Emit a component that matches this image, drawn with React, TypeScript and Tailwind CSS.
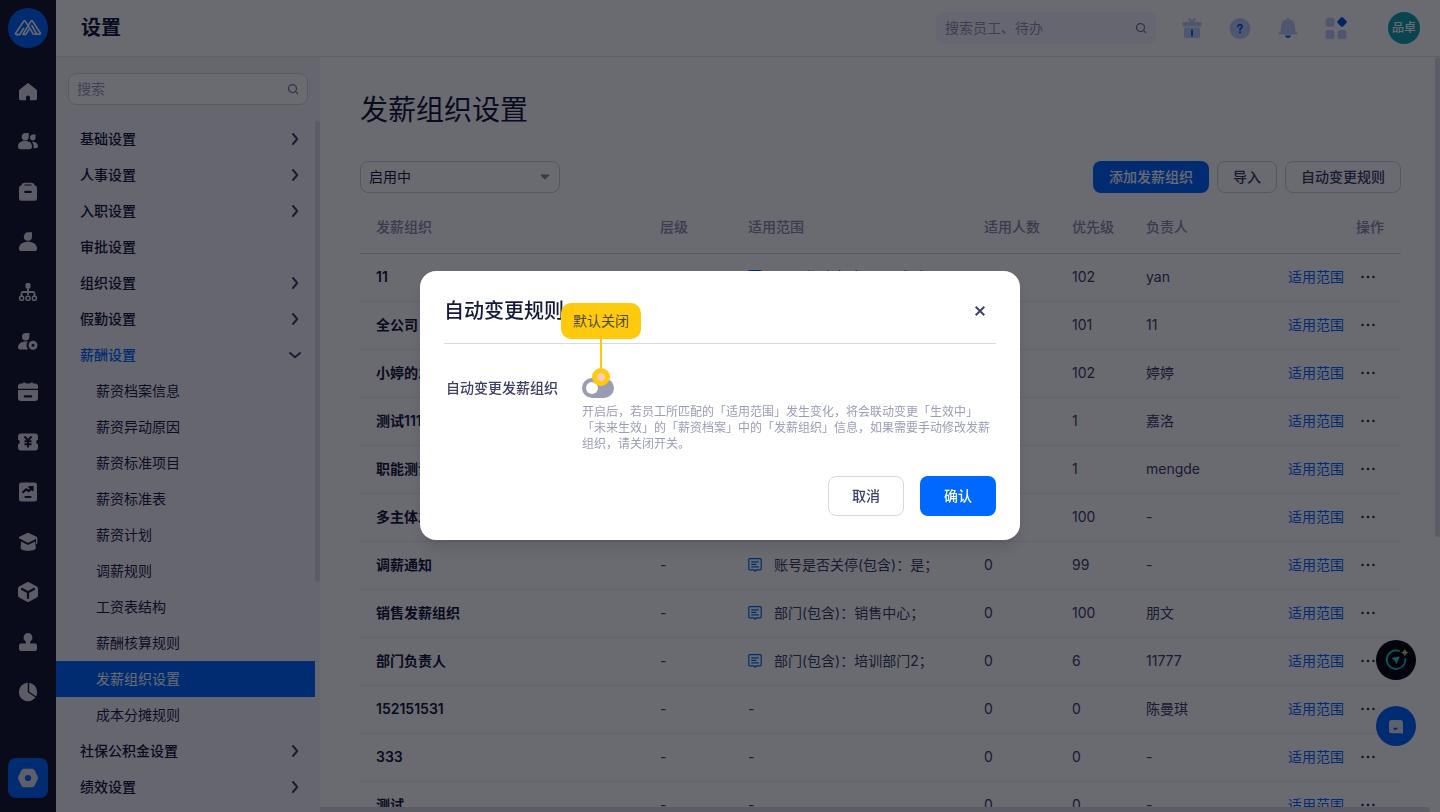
import React from "react";
import { Search } from "lucide-react";

const FONT = "font-['Inter','Noto_Sans_CJK_SC',sans-serif]";

const railIcons: { label: string; art: React.ReactNode }[] = [
  {
    label: "首页",
    art: <path d="M10.300 2.400 2.700 8.600A2 2 0 0 0 2 10.200V17.500A1.800 1.800 0 0 0 3.800 19.300H9V16.500a2 2 0 0 1 4 0v2.800h5.200A1.800 1.800 0 0 0 20 17.500V10.200a2 2 0 0 0-.700-1.600L11.700 2.400a1.100 1.100 0 0 0-1.400 0Z" />,
  },
  {
    label: "员工",
    art: (
      <>
        <path d="M4.700 6a4 4 0 0 1 4-4h3v3.700a3.500 3.500 0 0 1-7 .300ZM1 15.500C1 12 4 9.800 8 9.800s7 2.200 7 5.700c0 1.700-1 2.800-2.500 2.800h-9C2 18.300 1 17.200 1 15.500Z" />
        <path d="M13 6.200A3 3 0 0 1 16 3.500h2.500v3a3 3 0 0 1-3 3A3.200 3.200 0 0 1 13 6.200ZM15 10.700c3.500-.200 6 1.800 6 4.400 0 1.100-.800 2.100-2 2.100h-2.500c.500-2.500-.200-4.800-1.500-6.500Z" />
      </>
    ),
  },
  {
    label: "入职",
    art: (
      <path
        fillRule="evenodd"
        d="M7.200 1.800h7.600a3 3 0 0 1 2.800 2.400A3 3 0 0 1 20 7.200V17.500A2.300 2.300 0 0 1 17.700 19.800H4.300A2.300 2.300 0 0 1 2 17.500V7.200a3 3 0 0 1 2.400-3A3 3 0 0 1 7.200 1.800ZM7 4.500h8l-.800-1H7.800Zm1.200 5.300a1.100 1.100 0 0 0 0 2.200h5.600a1.100 1.100 0 0 0 0-2.200Z"
      />
    ),
  },
  {
    label: "个人",
    art: (
      <path d="M6.800 5.800A4.200 4.200 0 0 1 11 1.300h4v4.300a4.100 4.100 0 0 1-8.200.200ZM2 17.500C2 13.300 6 10.800 11 10.800s9 2.500 9 6.700a2.500 2.500 0 0 1-2.500 2.600h-13A2.500 2.500 0 0 1 2 17.500Z" />
    ),
  },
  {
    label: "组织",
    art: (
      <g>
        <rect x="8.500" y="2" width="5" height="5.500" rx="1.500" />
        <path d="M11 7v7M4.500 15v-2.500a1.500 1.500 0 0 1 1.500-1.500h10a1.500 1.500 0 0 1 1.500 1.500V15" fill="none" stroke="currentColor" strokeWidth="1.800" />
        <g fill="none" stroke="currentColor" strokeWidth="1.600">
          <rect x="2.700" y="15.200" width="3.800" height="4" rx="1.300" />
          <rect x="9.100" y="15.200" width="3.800" height="4" rx="1.300" />
          <rect x="15.500" y="15.200" width="3.800" height="4" rx="1.300" />
        </g>
      </g>
    ),
  },
  {
    label: "假勤",
    art: (
      <>
        <path d="M5 5.800A3.800 3.800 0 0 1 8.800 2h3.600v3.800a3.700 3.700 0 0 1-7.400 0ZM1 16.500C1 13 4 10.500 8.500 10.500h2.300a7 7 0 0 0 .200 7.900H3a2 2 0 0 1-2-1.900Z" />
        <path fillRule="evenodd" d="M16 9.800a4.500 4.500 0 1 1 0 9 4.500 4.500 0 0 1 0-9Zm0 3a1.500 1.500 0 1 0 0 3 1.500 1.500 0 0 0 0-3Z" />
      </>
    ),
  },
  {
    label: "日历",
    art: (
      <path
        fillRule="evenodd"
        d="M4 2.500h2V1.500h2.500v1h5v-1H16v1h2a3 3 0 0 1 3 3v2.200H1V5.500a3 3 0 0 1 3-3ZM1 9h20v8a3 3 0 0 1-3 3H4a3 3 0 0 1-3-3Zm6.800 5.300a1.100 1.100 0 0 0 0 2.200h6.400a1.100 1.100 0 0 0 0-2.200Z"
      />
    ),
  },
  {
    label: "薪酬",
    art: (
      <>
        <path d="M4 2.500h14a3 3 0 0 1 3 3V8.600a2.500 2.500 0 0 0 0 4.800v3.100a3 3 0 0 1-3 3H4a3 3 0 0 1-3-3v-3.100a2.500 2.500 0 0 0 0-4.800V5.500a3 3 0 0 1 3-3Z" />
        <path d="m7.500 5.500 3.500 4 3.500-4M7.500 10.200h7M7.500 13.200h7M11 9.500v7" fill="none" stroke="#161a2c" strokeWidth="2" />
      </>
    ),
  },
  {
    label: "绩效",
    art: (
      <>
        <rect x="2" y="1.500" width="18" height="19" rx="2.500" />
        <path d="m6.200 11 3-2.700 2.500 1.700 3.300-3.500M12.300 6h3.200v3.200M8.500 16h5" fill="none" stroke="#161a2c" strokeWidth="2.200" strokeLinecap="round" />
      </>
    ),
  },
  {
    label: "培训",
    art: (
      <>
        <path d="M10.200 2 2.500 5.800a1 1 0 0 0 0 1.800l7.700 4a2 2 0 0 0 1.700 0l7.600-4a1 1 0 0 0 0-1.800L11.900 2a2 2 0 0 0-1.700 0Z" />
        <path d="M4.200 10.600 10 13.500q1 .400 2 0l6-2.900.900 6.200c.100 1.700-3.300 3-7.700 3S3.500 18.500 3.600 16.800ZM19 7h1.300v6H19Z" />
      </>
    ),
  },
  {
    label: "应用",
    art: (
      <>
        <path d="M10 1.300 2.200 5.400A2.200 2.200 0 0 0 1 7.400v7.200a2.200 2.200 0 0 0 1.200 2L10 20.700a2.200 2.200 0 0 0 2 0l7.800-4.100a2.200 2.200 0 0 0 1.200-2V7.400a2.200 2.200 0 0 0-1.200-2L12 1.300a2.200 2.200 0 0 0-2 0Z" />
        <path d="m5 8 6 3.200L17 8M11 11.200V17" fill="none" stroke="#161a2c" strokeWidth="2.200" strokeLinecap="round" />
      </>
    ),
  },
  {
    label: "印章",
    art: (
      <path d="M11 2a4.500 4.500 0 0 0-3 7.800c.700.700 1 1.300 1 2.200v.500H4.200A2.200 2.200 0 0 0 2 14.700v3.100A2.200 2.200 0 0 0 4.200 20h13.600a2.200 2.200 0 0 0 2.200-2.200v-3.100a2.200 2.200 0 0 0-2.200-2.200H13V12c0-.900.300-1.500 1-2.200A4.500 4.500 0 0 0 11 2Z" />
    ),
  },
  {
    label: "报表",
    art: (
      <>
        <circle cx="11" cy="11" r="9.200" />
        <path d="M11.500 1v10l7.500 5" fill="none" stroke="#161a2c" strokeWidth="1.400" />
      </>
    ),
  },
];

type MenuItem = { label: string; arrow?: "right" | "down"; children?: string[] };

const menu: MenuItem[] = [
  { label: "基础设置", arrow: "right" },
  { label: "人事设置", arrow: "right" },
  { label: "入职设置", arrow: "right" },
  { label: "审批设置" },
  { label: "组织设置", arrow: "right" },
  { label: "假勤设置", arrow: "right" },
  {
    label: "薪酬设置",
    arrow: "down",
    children: [
      "薪资档案信息",
      "薪资异动原因",
      "薪资标准项目",
      "薪资标准表",
      "薪资计划",
      "调薪规则",
      "工资表结构",
      "薪酬核算规则",
      "发薪组织设置",
      "成本分摊规则",
    ],
  },
  { label: "社保公积金设置", arrow: "right" },
  { label: "绩效设置", arrow: "right" },
];

type Row = { name: string; scope: string; count: string; priority: string; owner: string };

const rows: Row[] = [
  { name: "11", scope: "员工类型(包含)：正式,实习;", count: "0", priority: "102", owner: "yan" },
  { name: "全公司", scope: "-", count: "0", priority: "101", owner: "11" },
  { name: "小婷的发薪组织", scope: "-", count: "0", priority: "102", owner: "婷婷" },
  { name: "测试111", scope: "-", count: "0", priority: "1", owner: "嘉洛" },
  { name: "职能测试", scope: "-", count: "0", priority: "1", owner: "mengde" },
  { name: "多主体发薪", scope: "-", count: "0", priority: "100", owner: "-" },
  { name: "调薪通知", scope: "账号是否关停(包含)：是；", count: "0", priority: "99", owner: "-" },
  { name: "销售发薪组织", scope: "部门(包含)：销售中心；", count: "0", priority: "100", owner: "朋文" },
  { name: "部门负责人", scope: "部门(包含)：培训部门2；", count: "0", priority: "6", owner: "11777" },
  { name: "152151531", scope: "-", count: "0", priority: "0", owner: "陈曼琪" },
  { name: "333", scope: "-", count: "0", priority: "0", owner: "-" },
  { name: "测试", scope: "-", count: "0", priority: "0", owner: "-" },
];

function Rail() {
  return (
    <nav aria-label="主导航" className="flex w-14 shrink-0 flex-col items-center justify-between bg-[#161a2c] pt-2 pb-[14px]">
      <div className="flex flex-col items-center">
        <a href="#home" aria-label="主页" className="flex size-10 items-center justify-center rounded-full bg-[#0068ff]">
          <svg viewBox="0 0 28 18" className="h-[18px] w-7" fill="none" stroke="#fff" strokeWidth="1.600" strokeLinejoin="round" strokeLinecap="round">
            <path d="M9.500 9.500 6 15.200a1 1 0 0 1-.800.400H2.300a.800.800 0 0 1-.700-1.200L9.700 2.200a1 1 0 0 1 1.600 0L19 14.600a1.200 1.200 0 0 0 1 .600h5.600a.800.800 0 0 0 .700-1.200L18.600 2.200a1 1 0 0 0-1.600 0l-2.700 4.200" />
            <path d="M13.200 8.200 9 15.400h2.800l3-4.800M17.800 6.500l5 8.700" />
          </svg>
        </a>
        <div className="mt-6 flex flex-col gap-[10px]">
          {railIcons.map((i) => (
            <a key={i.label} href="#nav" aria-label={i.label} className="flex size-10 items-center justify-center text-[#dcdee6]">
              <svg viewBox="0 0 22 22" className="size-[22px]" fill="currentColor">
                {i.art}
              </svg>
            </a>
          ))}
        </div>
      </div>
      <a href="#settings" aria-label="设置" className="flex size-10 items-center justify-center rounded-lg bg-[#0068ff] text-[#e4e4ea]">
        <svg viewBox="0 0 22 22" className="size-[22px]" fill="currentColor">
          <path
            fillRule="evenodd"
            d="M7 1.800h8a3 3 0 0 1 2.600 1.500l3 6.200a3 3 0 0 1 0 3l-3 6.200A3 3 0 0 1 15 20.200H7a3 3 0 0 1-2.600-1.500l-3-6.200a3 3 0 0 1 0-3l3-6.200A3 3 0 0 1 7 1.800Zm4 6.100a3.100 3.100 0 1 0 0 6.200 3.100 3.100 0 0 0 0-6.200Z"
          />
        </svg>
      </a>
    </nav>
  );
}

function Header() {
  return (
    <header className="flex h-[57px] shrink-0 items-center justify-between border-b border-[#e4e4ec] bg-white pr-5 pl-[25px]">
      <div className="text-xl font-semibold">设置</div>
      <div className="flex items-center gap-6">
        <label className="flex h-8 w-[220px] items-center rounded-lg bg-[#f4f6fc] px-[9px]">
          <input aria-label="搜索员工、待办" placeholder="搜索员工、待办" className="min-w-0 flex-1 bg-transparent text-sm outline-none placeholder:text-[#9195ae]" />
          <Search className="size-3 text-[#767b98]" strokeWidth={2.5} />
        </label>
        <button aria-label="礼物" className="flex size-6 items-center justify-center">
          <svg viewBox="0 0 24 24" className="size-6" fill="#bdcef8">
            <path d="m8.500 2.500 3.500 4 3.500-4" fill="none" stroke="#bdcef8" strokeWidth="2" />
            <rect x="2.500" y="6" width="19" height="4.500" rx="1" />
            <path d="M4 11.500h16v8.500a2 2 0 0 1-2 2H6a2 2 0 0 1-2-2Z" />
            <rect x="11" y="13.500" width="2" height="7" rx="1" fill="#0068ff" />
          </svg>
        </button>
        <button aria-label="帮助" className="flex size-6 items-center justify-center">
          <svg viewBox="0 0 24 24" className="size-6">
            <circle cx="12" cy="12.500" r="10.500" fill="#bdcef8" />
            <path d="M10 10.600a2 2 0 1 1 3 1.700c-.700.400-1 .700-1 1.500" fill="none" stroke="#0056e0" strokeWidth="1.700" strokeLinecap="round" />
            <circle cx="12" cy="16.300" r="1" fill="#0056e0" />
          </svg>
        </button>
        <button aria-label="通知" className="flex size-6 items-center justify-center">
          <svg viewBox="0 0 24 24" className="size-6">
            <path d="M12 2a1.200 1.200 0 0 1 1.200 1.200A7 7 0 0 1 19 10v4.500l2.200 2.500a.900.900 0 0 1-.700 1.500h-17A.900.900 0 0 1 2.800 17L5 14.500V10a7 7 0 0 1 5.800-6.800A1.200 1.200 0 0 1 12 2Z" fill="#bdcef8" />
            <path d="M8.800 19.500h6.400a3.300 3.300 0 0 1-6.400 0Z" fill="#0068ff" />
          </svg>
        </button>
        <div className="flex items-center gap-10">
          <button aria-label="应用" className="flex size-6 items-center justify-center">
            <svg viewBox="0 0 24 24" className="size-6" fill="#bdcef8">
              <rect x="1.500" y="1.700" width="9" height="9" rx="2.800" />
              <rect x="1.500" y="14" width="9" height="9" rx="2.800" />
              <rect x="13.500" y="14" width="9" height="9" rx="2.800" />
              <rect x="14.200" y="2.200" width="7.600" height="7.600" rx="1.400" transform="rotate(45 18 6)" fill="#0056e0" />
            </svg>
          </button>
          <button className="flex size-8 items-center justify-center rounded-full bg-[#18a5ad] text-xs font-medium text-white">品卓</button>
        </div>
      </div>
    </header>
  );
}

function Arrow({ down = false }: { down?: boolean }) {
  return (
    <svg viewBox="0 0 16 16" className="size-4" fill="none" stroke="#3f4468" strokeWidth="2" strokeLinecap="round" strokeLinejoin="round">
      <path d={down ? "m3 6 5 4.200L13 6" : "m6 3 4.200 5L6 13"} />
    </svg>
  );
}

function Sidebar() {
  return (
    <aside className="flex w-[264px] shrink-0 flex-col overflow-hidden bg-[#f6f6fb]">
      <div className="px-3 pt-4 pb-4">
        <label className="flex h-8 items-center rounded-lg border border-[#d8d8e4] bg-white px-2">
          <input aria-label="搜索" placeholder="搜索" className="min-w-0 flex-1 bg-transparent text-sm outline-none placeholder:text-[#9a9db5]" />
          <Search className="size-3 text-[#767b98]" strokeWidth={2.5} />
        </label>
      </div>
      <div className="flex min-h-0 flex-1 overflow-hidden">
        <ul className="min-w-0 flex-1 text-sm">
          {menu.map((m) => (
            <li key={m.label}>
              <button className={`flex h-9 w-full items-center justify-between pr-3 pl-6 font-medium ${m.arrow === "down" ? "text-[#0068ff]" : ""}`}>
                {m.label}
                {m.arrow && <Arrow down={m.arrow === "down"} />}
              </button>
              {m.children && (
                <ul>
                  {m.children.map((c) => (
                    <li key={c}>
                      <a href="#setting" className={`flex h-9 items-center pl-10 ${c === "发薪组织设置" ? "bg-[#0068ff] text-white" : "text-[#1a1f43]"}`}>
                        {c}
                      </a>
                    </li>
                  ))}
                </ul>
              )}
            </li>
          ))}
        </ul>
        <div className="h-[461px] w-[5px] shrink-0 rounded-full bg-[#dcdce6]" />
      </div>
    </aside>
  );
}

function ScopeIcon() {
  return (
    <svg viewBox="0 0 14 14" className="size-[14px] shrink-0" fill="none" stroke="#0068ff" strokeWidth="1.200">
      <path d="M1.800.700h10.400a1 1 0 0 1 1 1v9.100a1 1 0 0 1-1 1H8.300L7 13.200l-1.300-1.400H1.800a1 1 0 0 1-1-1V1.700a1 1 0 0 1 1-1Z" />
      <path d="M3.200 3.800h7.600M3.200 6.300h5.300M3.200 8.800h7.600" />
    </svg>
  );
}

function OrgTable() {
  return (
    <table className="mt-2 w-full table-fixed text-left text-sm">
      <colgroup>
        <col className="w-[284px]" />
        <col className="w-[88px]" />
        <col className="w-[236px]" />
        <col className="w-[88px]" />
        <col className="w-[74px]" />
        <col />
        <col className="w-[129px]" />
      </colgroup>
      <thead>
        <tr className="h-[52px] border-b border-[#d2d3e2] text-[#8a8eaa]">
          {["发薪组织", "层级", "适用范围", "适用人数", "优先级", "负责人"].map((h) => (
            <th key={h} className="pl-4 font-medium whitespace-nowrap">{h}</th>
          ))}
          <th className="pr-[17px] text-right font-medium">操作</th>
        </tr>
      </thead>
      <tbody>
        {rows.map((r) => (
          <tr key={r.name} className="h-12 border-b border-[#eeeef4] text-[#3a3f63]">
            <td className="pl-4 font-semibold whitespace-nowrap text-[#141938]">{r.name}</td>
            <td className="pl-4">-</td>
            <td className="pl-4 whitespace-nowrap">
              {r.scope === "-" ? "-" : (
                <span className="flex items-center gap-3">
                  <ScopeIcon />
                  {r.scope}
                </span>
              )}
            </td>
            <td className="pl-4">{r.count}</td>
            <td className="pl-4">{r.priority}</td>
            <td className="pl-4">{r.owner}</td>
            <td className="pl-4">
              <div className="flex items-center gap-4">
                <a href="#scope" className="whitespace-nowrap text-[#0068ff]">适用范围</a>
                <button aria-label="更多">
                  <svg viewBox="0 0 16 4" className="h-1 w-4" fill="#2c3156">
                    <circle cx="2.500" cy="2" r="1.300" />
                    <circle cx="8" cy="2" r="1.300" />
                    <circle cx="13.500" cy="2" r="1.300" />
                  </svg>
                </button>
              </div>
            </td>
          </tr>
        ))}
      </tbody>
    </table>
  );
}

function Content() {
  return (
    <main className="flex min-w-0 flex-1 flex-col overflow-hidden bg-white">
      <div className="flex min-h-0 flex-1 overflow-hidden">
        <div className="min-w-0 flex-1 pt-8 pr-[34px] pl-10">
          <h1 className="text-[28px] leading-[42px]">发薪组织设置</h1>
          <div className="mt-[30px] flex items-center justify-between">
            <div className="relative w-[200px]">
              <select aria-label="状态" className="h-8 w-full appearance-none rounded-lg border border-[#d0d1e0] bg-white px-2 text-sm">
                <option>启用中</option>
              </select>
              <svg viewBox="0 0 10 6" className="pointer-events-none absolute top-[13px] right-[10px] h-[6px] w-[10px]" fill="#8a8eaa">
                <path d="M1.200.500h7.600a.500.500 0 0 1 .400.900L5.500 5.200a.800.800 0 0 1-1 0L.800 1.400a.500.500 0 0 1 .400-.900Z" />
              </svg>
            </div>
            <div className="flex gap-2 text-sm font-medium">
              <button className="h-8 rounded-lg bg-[#0068ff] px-4 text-white">添加发薪组织</button>
              <button className="h-8 rounded-lg border border-[#d0d1e0] px-[15px] text-[#3a3f63]">导入</button>
              <button className="h-8 rounded-lg border border-[#d0d1e0] px-[15px] text-[#3a3f63]">自动变更规则</button>
            </div>
          </div>
          <OrgTable />
        </div>
        <div className="h-[480px] w-[5px] shrink-0 rounded-full bg-[#dcdce6]" />
      </div>
      <div className="mr-[10px] h-[5px] shrink-0 rounded-r-full bg-[#dcdce6]" />
    </main>
  );
}

function FloatingButtons() {
  return (
    <div className="fixed right-6 bottom-[66px] flex flex-col gap-[26px]">
      <button aria-label="助手" className="flex size-10 items-center justify-center rounded-full bg-[#04050c]">
        <svg viewBox="0 0 26 26" className="size-[26px]" fill="none">
          <defs>
            <linearGradient id="ring" x1="0" y1="0" x2="1" y2="1">
              <stop offset="0" stopColor="#22e39a" />
              <stop offset="1" stopColor="#13a8e0" />
            </linearGradient>
          </defs>
          <path d="M16 3.900A9.300 9.300 0 1 0 22.300 12" stroke="url(#ring)" strokeWidth="1.800" strokeLinecap="round" />
          <path d="M9.300 10.800 16 9.600a.500.500 0 0 1 .600.700l-2.900 6.300a.500.500 0 0 1-.900-.100l-.600-2.300-2.900-2.500a.500.500 0 0 1 0-.900Z" fill="#2bd3cf" />
          <path d="M21.800 1.500q.700 3.400 4 4.100-3.300.700-4 4.100-.700-3.400-4-4.100 3.300-.700 4-4.100Z" fill="#b8d65c" />
        </svg>
      </button>
      <button aria-label="客服" className="flex size-10 items-center justify-center rounded-full bg-[#0068ff]">
        <svg viewBox="0 0 16 16" className="size-4" fill="#e0e6f4">
          <path d="M3.500 2h9A2.500 2.500 0 0 1 15 4.500V16l-1.500-.800H3.500A2.500 2.500 0 0 1 1 12.700V4.500A2.500 2.500 0 0 1 3.500 2Z" />
          <path d="M5.200 9.700h4.400a2.200 2.200 0 0 1-4.400 0Z" fill="#0068ff" />
        </svg>
      </button>
    </div>
  );
}

function RuleDialog() {
  return (
    <div className="fixed inset-0 flex items-center justify-center bg-[#02020e]/59 pb-0.5">
      <div role="dialog" aria-modal="true" aria-labelledby="rule-title" className="w-[600px] max-w-full rounded-2xl bg-white px-6 pb-6 shadow-lg">
        <div className="flex h-[73px] items-center justify-between border-b border-[#d8d8e6] pt-2">
          <h2 id="rule-title" className="text-xl font-medium text-[#141938]">自动变更规则</h2>
          <button aria-label="关闭" className="flex size-8 items-center justify-center">
            <svg viewBox="0 0 12 12" className="size-3" stroke="#3f4468" strokeWidth="2">
              <path d="m1.700 1.700 8.600 8.600M10.300 1.700l-8.600 8.600" />
            </svg>
          </button>
        </div>
        <div className="grid grid-cols-[114px_1fr] gap-x-6 pt-[34px]">
          <label htmlFor="auto-change" className="text-right text-sm leading-5 font-medium whitespace-nowrap text-[#3a3f63]">自动变更发薪组织</label>
          <div>
            <div className="relative h-5 w-8">
              <input
                id="auto-change"
                type="checkbox"
                role="switch"
                className="block h-5 w-8 appearance-none rounded-full bg-[#9a9cb4] before:mt-1 before:ml-1 before:block before:size-3 before:rounded-full before:bg-white"
              />
              <div className="pointer-events-none absolute bottom-3 -left-[21px] flex w-20 flex-col items-center">
                <div className="flex h-9 w-full items-center justify-center rounded-[10px] bg-[#ffca0d] text-sm text-[#4d4a3c]">默认关闭</div>
                <div className="h-[29px] w-0.5 bg-[#ffca0d]" />
                <div className="size-[18px] rounded-full border-[5px] border-[#ffca0d] bg-[#ffcdb2]" />
              </div>
            </div>
            <p className="mt-[6px] text-xs leading-4 text-[#9a9db5] [text-spacing-trim:space-all]">
              开启后，若员工所匹配的「适用范围」发生变化，将会联动变更「生效中」「未来生效」的「薪资档案」中的「发薪组织」信息，如果需要手动修改发薪组织，请关闭开关。
            </p>
          </div>
        </div>
        <div className="mt-6 flex justify-end gap-4 text-sm font-medium">
          <button className="h-10 rounded-lg border border-[#d8d8e6] px-[23px] text-[#3a3f63]">取消</button>
          <button className="h-10 rounded-lg bg-[#0068ff] px-6 text-white">确认</button>
        </div>
      </div>
    </div>
  );
}

export default function App() {
  return (
    <div className={`flex h-screen overflow-hidden text-[#141938] ${FONT}`}>
      <Rail />
      <div className="flex min-w-0 flex-1 flex-col">
        <Header />
        <div className="flex min-h-0 flex-1">
          <Sidebar />
          <Content />
        </div>
      </div>
      <FloatingButtons />
      <RuleDialog />
    </div>
  );
}
